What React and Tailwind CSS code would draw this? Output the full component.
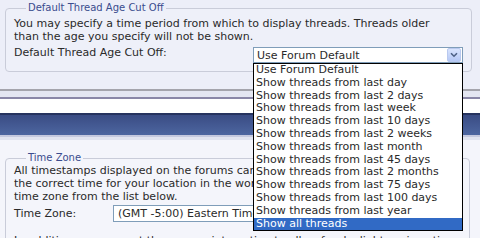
import React from "react";

const ageOptions = [
  "Use Forum Default",
  "Show threads from last day",
  "Show threads from last 2 days",
  "Show threads from last week",
  "Show threads from last 10 days",
  "Show threads from last 2 weeks",
  "Show threads from last month",
  "Show threads from last 45 days",
  "Show threads from last 2 months",
  "Show threads from last 75 days",
  "Show threads from last 100 days",
  "Show threads from last year",
  "Show all threads",
];

const ArrowButton = () => (
  <div className="w-[14px] h-[14px] rounded-[2px] border border-[#b9c9ef] bg-gradient-to-b from-[#d9e4fd] to-[#b5c8f5] flex items-center justify-center">
    <svg width="8" height="6" viewBox="0 0 8 6">
      <path d="M1 1.2 L4 4.2 L7 1.2" fill="none" stroke="#4d6185" strokeWidth="1.6" />
    </svg>
  </div>
);

export default function App() {
  return (
    <div className="relative w-[480px] h-[238px] overflow-hidden bg-[#eceef8] text-[11px] leading-[13px] text-[#2a2a2a] font-['DejaVu_Sans',_Verdana,_sans-serif]">
      {/* Thread age fieldset */}
      <div className="pl-[5px] pt-[2px] pr-[14px] h-[89px]">
        <fieldset className="border border-[#c9ccd9] rounded-[4px] bg-[#eef0f9] pl-[8px] pr-2 pb-[8px]">
          <legend className="ml-[12px] px-[2px] text-[#3a4c8e] text-[10px] leading-[12px]">
            Default Thread Age Cut Off
          </legend>
          <p className="mt-[3px] whitespace-nowrap">
            You may specify a time period from which to display threads. Threads older
            <br />
            than the age you specify will not be shown.
          </p>
          <div className="flex items-start mt-[4px]">
            <span className="w-[239px] mt-[-1px]">Default Thread Age Cut Off:</span>
            <div className="w-[210px] h-[16px] bg-white border border-[#7f9db9] flex items-center justify-between pl-[3px] pr-[1px]">
              <span>Use Forum Default</span>
              <ArrowButton />
            </div>
          </div>
        </fieldset>
      </div>

      {/* separators and blue bar */}
      <div className="h-[2px] bg-[#a4a4ac]" />
      <div className="h-[6px] bg-[#e4e6f1]" />
      <div className="h-[2px] bg-[#8a87a7]" />
      <div className="h-[14px] bg-white" />
      <div className="h-[2px] bg-[#26335f]" />
      <div className="h-[20px] bg-gradient-to-b from-[#3a4c84] to-[#4d66a0]" />
      <div className="h-[2px] bg-[#c5c9df]" />
      <div className="h-[3px] bg-[#e1e4f0]" />

      {/* Time zone fieldset */}
      <div className="bg-[#f4f5fb] pl-[5px] pr-[10px] pt-[12px]">
        <fieldset className="border border-[#c9ccd9] rounded-[4px] bg-[#f4f5fb] pl-[8px] pr-2 pb-2">
          <legend className="ml-[12px] px-[2px] text-[#3a4c8e] text-[10px] leading-[12px]">Time Zone</legend>
          <p className="whitespace-nowrap">
            All timestamps displayed on the forums can be automatically corrected to show
            <br />
            the correct time for your location in the world. Simply select the appropriate
            <br />
            time zone from the list below.
          </p>
          <div className="flex items-center mt-[2px]">
            <span className="w-[99px]">Time Zone:</span>
            <div className="w-[300px] h-[17px] bg-white border border-[#7f9db9] flex items-center pl-[4px]">
              <span className="whitespace-nowrap">(GMT -5:00) Eastern Time (US &amp; Canada), Bogota, Lima</span>
            </div>
          </div>
          <p className="mt-[12px] whitespace-nowrap">
            In addition, you can set the appropriate option to allow for daylight savings time
          </p>
        </fieldset>
      </div>

      {/* open dropdown list */}
      <ul className="absolute left-[253px] top-[63px] w-[210px] bg-white border border-black">
        {ageOptions.map((opt, i) => (
          <li
            key={opt}
            className={
              i === ageOptions.length - 1
                ? "h-[12.8px] leading-[12.8px] pl-[2px] bg-[#316ac5] text-white"
                : "h-[12.8px] leading-[12.8px] pl-[2px]"
            }
          >
            {opt}
          </li>
        ))}
      </ul>
    </div>
  );
}
